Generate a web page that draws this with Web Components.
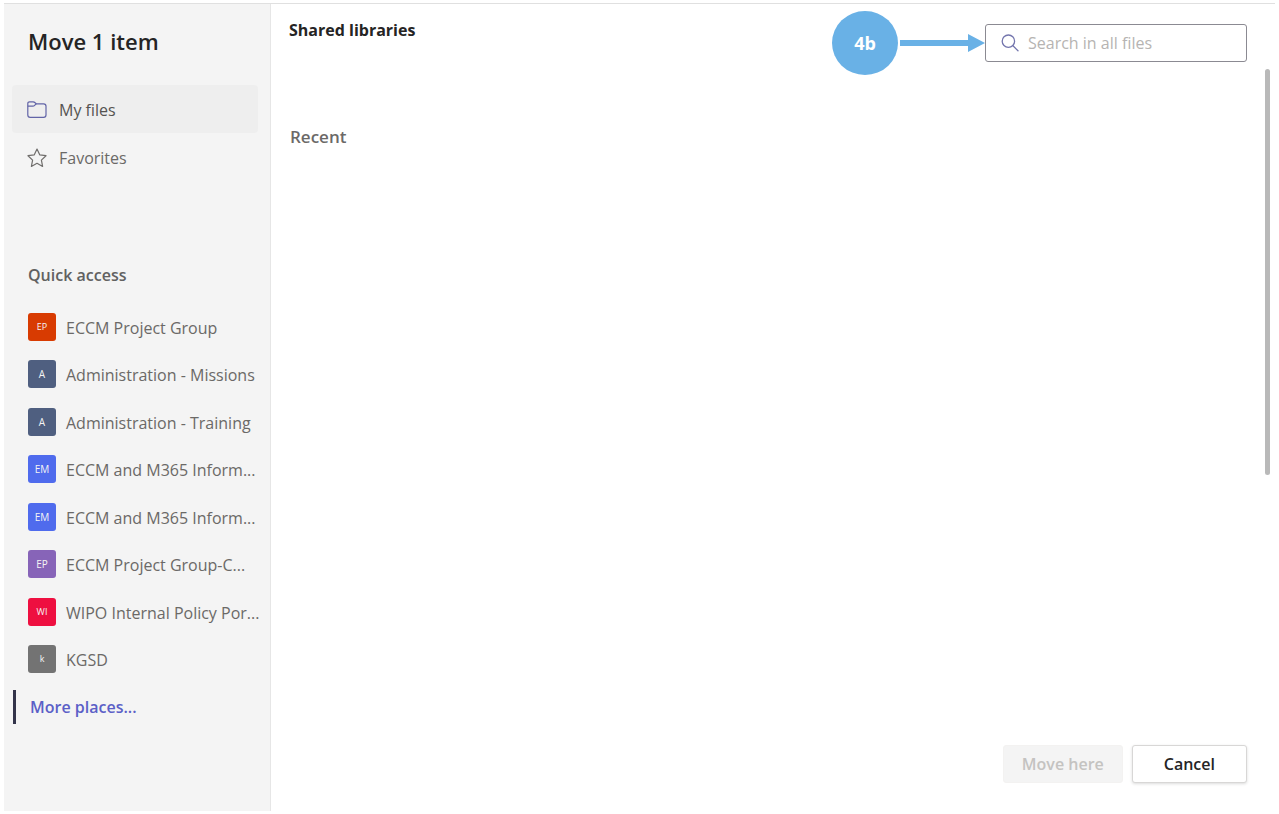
<!DOCTYPE html>
<html lang="en">
<head>
<meta charset="utf-8">
<title>Move 1 item</title>
<style>
  body { margin: 0; background: #fff; font-family: "Open Sans", "Noto Sans", sans-serif; font-size: 16px; line-height: 24px; color: #252424; }
</style>
</head>
<body>
<move-dialog></move-dialog>

<script>
class BaseElement extends HTMLElement {
  connectedCallback() {
    if (this.shadowRoot) return;
    this.attachShadow({ mode: "open" }).innerHTML =
      "<style>*{box-sizing:border-box} :host{box-sizing:border-box}</style>" + this.render();
  }
}

/* Entry of the upper navigation: icon slot and label */
customElements.define("nav-item", class extends BaseElement {
  render() {
    return `<style>
      :host { display: block; }
      a { display: flex; align-items: center; gap: 12px; height: 48px; padding: 2px 15px 0; border-radius: 4px; color: #6b6967; text-decoration: none; }
      :host([selected]) a { background: #eeeeee; color: #555351; }
      ::slotted(svg) { display: block; width: 20px; height: 20px; flex: none; }
    </style>
    <a href="#"><slot name="icon"></slot><slot></slot></a>`;
  }
});

/* Team shortcut: coloured tile with initials and the library's name */
customElements.define("team-link", class extends BaseElement {
  render() {
    const size = this.getAttribute("size") || 10;
    return `<style>
      :host { display: flex; min-height: 0; }
      a { flex: 1; display: flex; align-items: center; gap: 10px; padding-left: 16px; color: #6b6967; text-decoration: none; white-space: nowrap; }
      .tile { display: grid; place-items: center; flex: none; width: 28px; height: 28px; border-radius: 3px; background: ${this.getAttribute("color")}; color: #f4f4f4; font-size: ${size}px; line-height: 16px; }
      .name { padding-top: 2px; }
    </style>
    <a href="#"><span class="tile">${this.getAttribute("initials")}</span><span class="name"><slot></slot></span></a>`;
  }
});

customElements.define("side-bar", class extends BaseElement {
  render() {
    return `<style>
      :host { display: block; width: 267px; flex: none; padding: 0 12px 0 8px; background: #f4f4f4; border-right: 1px solid #e6e6e6; }
      h1 { margin: 0; padding: 21px 16px 28px; font-size: 22px; line-height: 32px; font-weight: 600; color: #252424; }
      h2 { margin: 0; padding: 82px 16px 0; font-size: 16px; line-height: 24px; font-weight: 600; color: #616161; }
      .teams { display: grid; grid-auto-rows: 1fr; height: 380px; margin-top: 16px; }
      .more { display: flex; align-items: center; height: 48px; color: #5b5fc7; font-weight: 600; text-decoration: none; }
      .more::before { content: ""; width: 3px; height: 34px; margin: 0 14px 0 1px; background: #33344a; }
    </style>
    <h1>Move 1 item</h1>
    <nav aria-label="Files">
      <nav-item selected>
        <svg slot="icon" viewBox="0 0 20 20" fill="none" stroke="#6264a7" stroke-width="1.2" stroke-linejoin="round"><path d="M.8 3.5Q.8 1.8 2.6 1.8H6.2Q7.2 1.8 7.8 2.5L9.2 3.8H16.6Q19 3.8 19 6.2V15Q19 17.4 16.6 17.4H3.2Q.8 17.4.8 15Z"/><path d="M.8 6.2H5.8Q6.9 6.2 7.6 5.4L9.2 3.8"/></svg>
        My files
      </nav-item>
      <nav-item>
        <svg slot="icon" viewBox="0 0 20 20" fill="none" stroke="#706e6c" stroke-width="1.2" stroke-linejoin="round"><path d="M10 1.1 12.7 6.8 19 7.7 14.4 12.1 15.6 18.4 10 15.3 4.4 18.4 5.6 12.1 1 7.7 7.3 6.8Z"/></svg>
        Favorites
      </nav-item>
    </nav>
    <h2>Quick access</h2>
    <nav class="teams" aria-label="Quick access">
      <team-link initials="EP" color="#d83b01" size="9">ECCM Project Group</team-link>
      <team-link initials="A" color="#4f5f80">Administration - Missions</team-link>
      <team-link initials="A" color="#4f5f80">Administration - Training</team-link>
      <team-link initials="EM" color="#4f6bed">ECCM and M365 Inform...</team-link>
      <team-link initials="EM" color="#4f6bed">ECCM and M365 Inform...</team-link>
      <team-link initials="EP" color="#8764b8">ECCM Project Group-C...</team-link>
      <team-link initials="WI" color="#ee0f40" size="9">WIPO Internal Policy Por...</team-link>
      <team-link initials="k" color="#737373" size="9">KGSD</team-link>
    </nav>
    <a class="more" href="#">More places...</a>`;
  }
});

customElements.define("search-box", class extends BaseElement {
  render() {
    return `<style>
      :host { display: block; width: 262px; flex: none; }
      label { display: flex; align-items: center; gap: 9px; height: 38px; padding: 0 15px; border: 1px solid #8b8a92; border-radius: 3px; background: #fff; }
      svg { width: 18px; height: 18px; flex: none; }
      input { flex: 1; min-width: 0; padding: 0; border: 0; outline: 0; background: none; font: inherit; color: #252424; }
      input::placeholder { color: #b6b4b2; opacity: 1; }
    </style>
    <label><svg viewBox="0 0 18 18" fill="none" stroke="#7375ad" stroke-width="1.3" stroke-linecap="round" aria-hidden="true"><circle cx="7.4" cy="7.2" r="6.2"/><path d="M12 11.8 17 16.8"/></svg>
    <input type="search" aria-label="Search in all files" placeholder="Search in all files"></label>`;
  }
});

/* Numbered step marker whose arrow points at the next control */
customElements.define("step-callout", class extends BaseElement {
  render() {
    return `<style>
      :host { display: flex; align-items: center; flex: none; }
      span { display: grid; place-items: center; width: 66px; height: 64px; border-radius: 50%; background: #69b1e6; color: #fff; font-size: 18px; font-weight: 700; }
      svg { display: block; width: 85px; height: 18px; margin-left: 2px; }
    </style>
    <span><slot></slot></span>
    <svg viewBox="0 0 85 18" fill="#69b1e6" aria-hidden="true"><path d="M0 6H68V0L85 9 68 18V12H0Z"/></svg>`;
  }
});

customElements.define("action-button", class extends BaseElement {
  render() {
    const off = this.hasAttribute("disabled") ? "disabled" : "";
    return `<style>
      :host { display: block; }
      button { display: block; height: 38px; padding: 0 31px; border: 1px solid #d8d7d6; border-radius: 3px; background: #fff; box-shadow: 0 1px 3px rgba(0,0,0,.14); font: inherit; font-weight: 600; color: #252424; }
      button:disabled { padding: 0 18px; border-color: #f3f2f1; background: #f4f4f4; box-shadow: none; color: #c4c3c1; }
    </style>
    <button type="button" ${off}><slot></slot></button>`;
  }
});

customElements.define("move-dialog", class extends BaseElement {
  render() {
    return `<style>
      :host { display: flex; min-height: 100vh; padding: 3px 4px; }
      .frame { flex: 1; display: flex; border-top: 1px solid #e0e0e0; }
      main { flex: 1; min-width: 0; display: flex; flex-direction: column; padding: 7px 28px 28px 18px; }
      header { display: flex; align-items: center; }
      h2 { margin: 0; align-self: flex-start; flex: 1; padding-top: 7px; font-size: 16px; line-height: 24px; font-weight: 700; }
      .content { flex: 1; display: flex; justify-content: space-between; margin: -6px -24px 0 0; }
      h3 { margin: 0; padding: 56px 1px 0; font-size: 17px; line-height: 24px; font-weight: 600; color: #6b6967; }
      .thumb { width: 5px; height: 406px; margin-right: 1px; border-radius: 3px; background: #b9b9b9; }
      footer { display: flex; justify-content: flex-end; gap: 9px; margin-top: 8px; }
    </style>
    <div class="frame">
      <side-bar></side-bar>
      <main>
        <header><h2>Shared libraries</h2><step-callout>4b</step-callout><search-box></search-box></header>
        <section class="content"><h3>Recent</h3><div class="thumb"></div></section>
        <footer><action-button disabled>Move here</action-button><action-button>Cancel</action-button></footer>
      </main>
    </div>`;
  }
});
</script>
</body>
</html>
